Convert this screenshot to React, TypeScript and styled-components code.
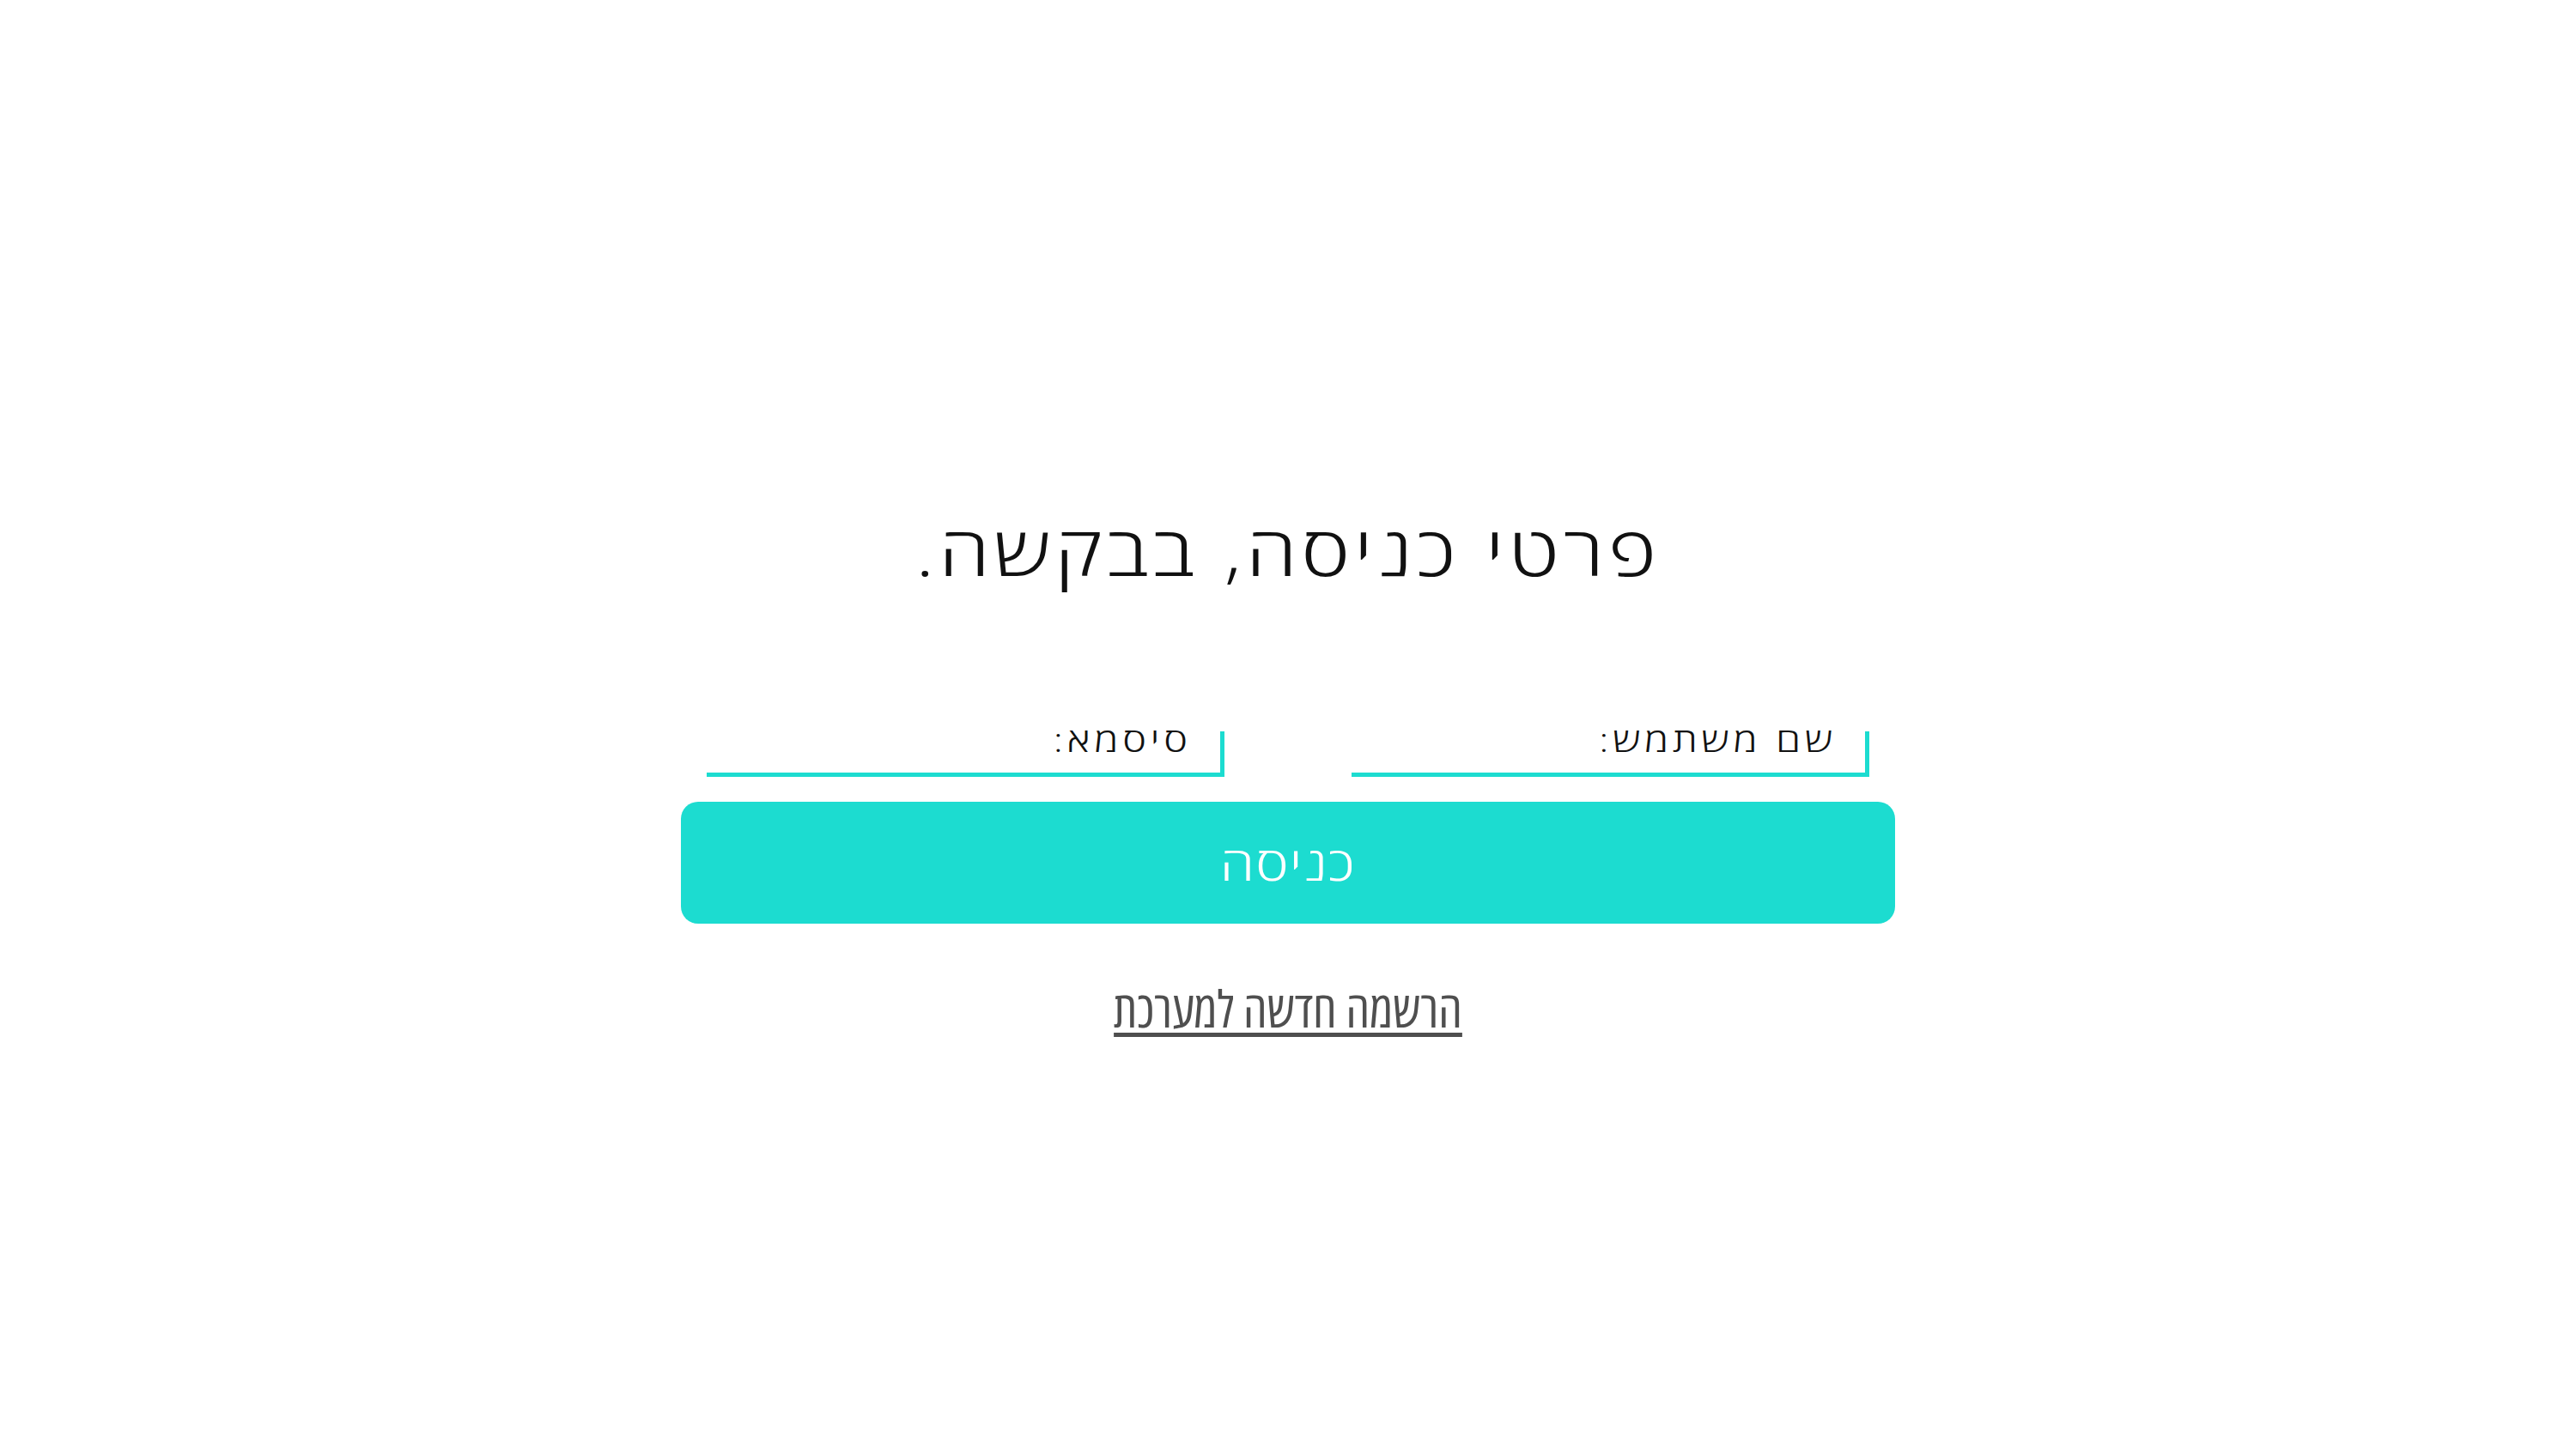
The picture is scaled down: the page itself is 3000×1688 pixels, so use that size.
import React from "react";
import styled, { createGlobalStyle } from "styled-components";

const Global = createGlobalStyle`
  body {
    margin: 0;
    background: #ffffff;
    font-family: "Open Sans", "DejaVu Sans", sans-serif;
  }
`;

const Page = styled.div`
  direction: rtl;
  display: flex;
  justify-content: center;
  padding-top: 588px;
`;

const Form = styled.form`
  width: 1414px;
  display: flex;
  flex-direction: column;
  align-items: center;
`;

/* the reference face is wider than Open Sans, so widen the glyphs a bit */
const Wide = styled.span`
  display: inline-block;
  transform: scaleX(1.2);
`;

const Title = styled.h1`
  margin: 0 0 160px;
  font-size: 80px;
  font-weight: 320;
  letter-spacing: 4px;
  line-height: 1.3;
  color: #111;
`;

const Fields = styled.div`
  align-self: stretch;
  display: flex;
  justify-content: space-between;
  padding: 0 30px;
`;

const Field = styled.div`
  width: 598px;
  height: 48px;
  box-sizing: content-box;
  border-right: 5px solid #1cdcd0;
  border-bottom: 5px solid #1cdcd0;
`;

const Input = styled.input`
  display: block;
  width: calc(100% / 1.2);
  box-sizing: border-box;
  height: 60px;
  margin-top: -22px;
  padding: 0 28px 0 0;
  border: none;
  outline: none;
  background: transparent;
  font-family: inherit;
  font-size: 39px;
  font-weight: 320;
  letter-spacing: 4px;
  color: #111;
  direction: rtl;
  transform: scaleX(1.2);
  transform-origin: right center;

  &::placeholder {
    color: #111;
    opacity: 1;
  }
`;

const Submit = styled.button`
  align-self: stretch;
  margin-top: 29px;
  height: 142px;
  border: none;
  border-radius: 20px;
  background: #1cdcd0;
  color: #ffffff;
  font-family: inherit;
  font-size: 54px;
  font-weight: 300;
  letter-spacing: 1px;
  cursor: pointer;
`;

const Register = styled.a`
  margin-top: 58px;
  font-size: 59px;
  font-stretch: 75%;
  color: #4f4f4f;
  text-decoration: underline;
  text-decoration-thickness: 5px;
  text-underline-offset: 6px;
  cursor: pointer;
`;

export default function App() {
  return (
    <>
      <Global />
      <Page>
        <Form onSubmit={(e) => e.preventDefault()}>
          <Title>
            <Wide>פרטי כניסה, בבקשה.</Wide>
          </Title>
          <Fields>
            <Field>
              <Input placeholder="שם משתמש:" />
            </Field>
            <Field>
              <Input type="password" placeholder="סיסמא:" />
            </Field>
          </Fields>
          <Submit type="submit">
            <Wide>כניסה</Wide>
          </Submit>
          <Register>הרשמה חדשה למערכת</Register>
        </Form>
      </Page>
    </>
  );
}
